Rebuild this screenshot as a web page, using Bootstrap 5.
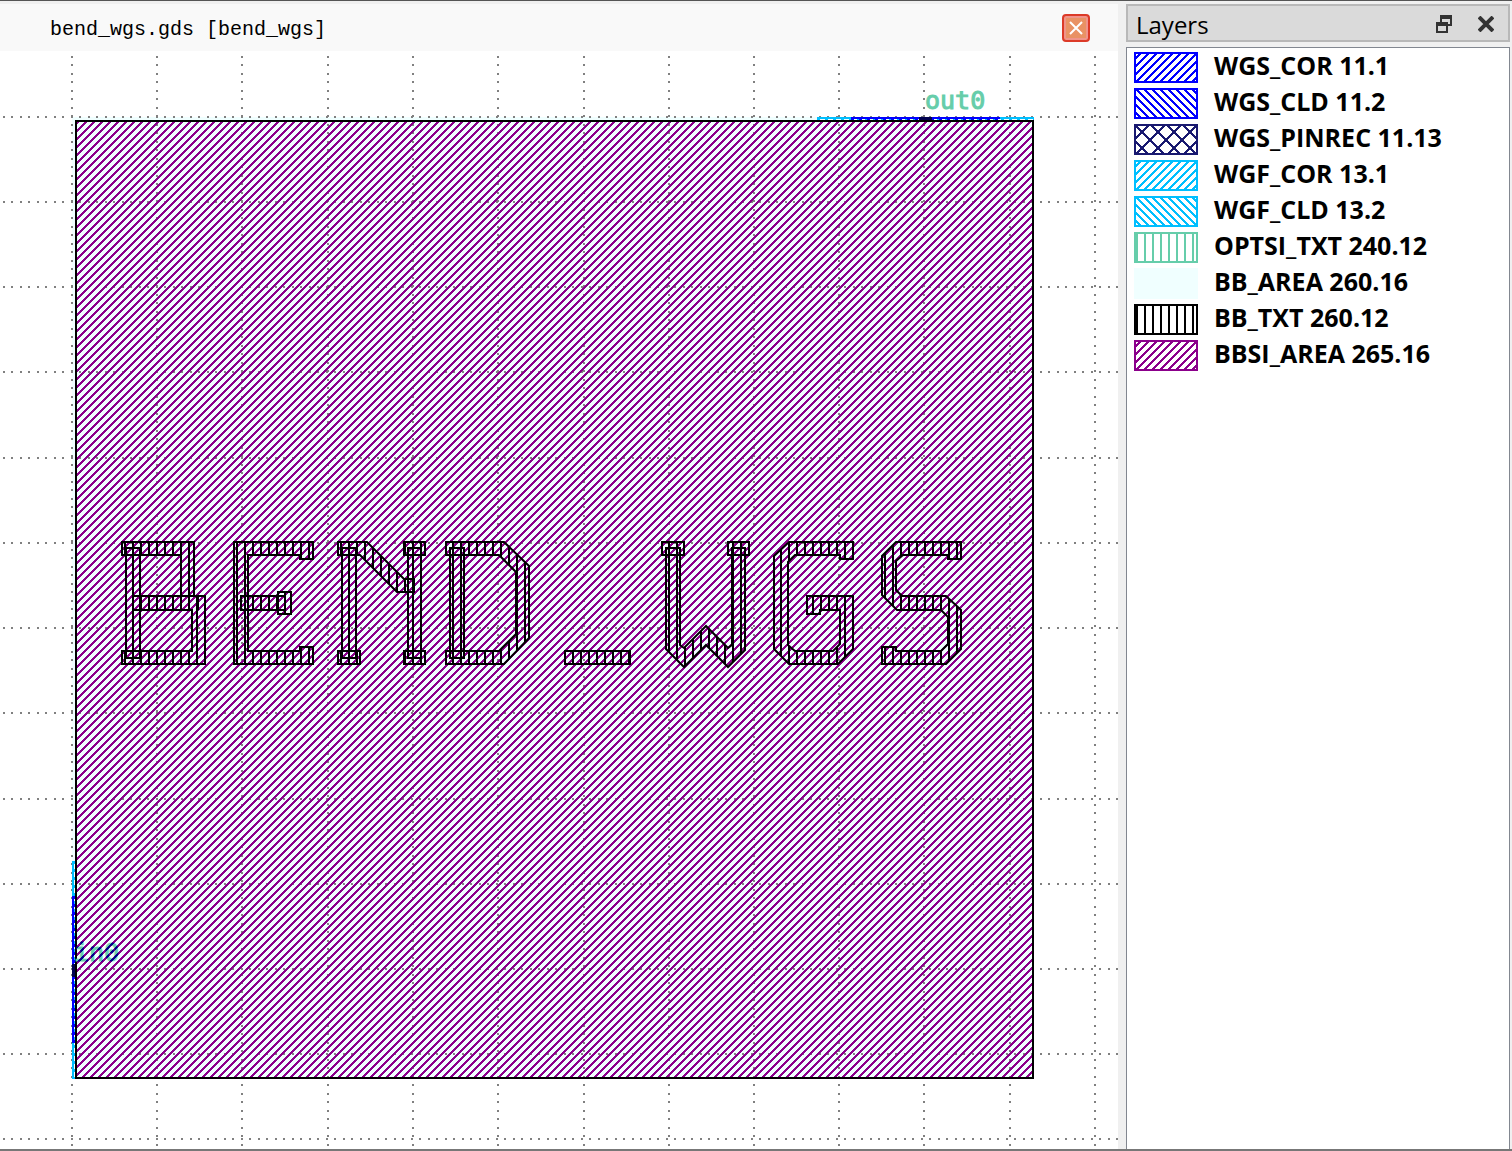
<!DOCTYPE html>
<html lang="en">
<head>
<meta charset="utf-8">
<meta name="viewport" content="width=device-width, initial-scale=1">
<title>bend_wgs.gds</title>
<link href="https://cdn.jsdelivr.net/npm/bootstrap@5.3.0/dist/css/bootstrap.min.css" rel="stylesheet">
<style>
  body { background: #f0f0f0; color: #000; }
  .app-shell { border-top: 1px solid #555; border-bottom: 2px solid #777; padding-top: 3px; }
  .view-tab { height: 47px; background: #f9f9f9; padding: 0 28px 0 50px; font: 20px "Liberation Mono", monospace; }
  .view-tab span { padding-top: 4px; }
  .tab-close { width: 28px; height: 28px; border: 2px solid #dc3a28; border-radius: 4px; background: #e99264; box-shadow: inset 0 0 0 2px #f0948a; }
  .layout-view { background: #fff; }
  .layer-dock { width: 386px; margin-left: 8px; padding-right: 2px; font-family: "Open Sans", sans-serif; }
  .dock-title { height: 38px; background: #dadada; border: 2px solid #b8b8b8; padding: 2px 10px 0 8px; font-size: 24px; }
  .dock-title span { padding-top: 2px; }
  .dock-title button { width: 24px; height: 24px; }
  .dock-title .tools { gap: 18px; }
  .layer-list { margin-top: 5px; background: #fff; border: 1px solid #828790; border-bottom: 0; padding: 1px 7px; font-size: 25px; font-weight: 700; line-height: 32px; }
  .layer-list li { height: 36px; gap: 16px; }
  .layer-list span { padding-bottom: 4px; }
  .cell-label { font: 25px "DejaVu Sans Mono", monospace; }
</style>
<script src="https://cdn.jsdelivr.net/npm/bootstrap@5.3.0/dist/js/bootstrap.bundle.min.js"></script>
</head>
<body>
<div class="app-shell d-flex vh-100 overflow-hidden">
  <main class="d-flex flex-column flex-grow-1">
    <div class="view-tab d-flex align-items-center justify-content-between flex-shrink-0">
      <span>bend_wgs.gds [bend_wgs]</span>
      <button class="tab-close d-flex align-items-center justify-content-center p-0" aria-label="Close view">
        <svg width="14" height="14" stroke="#fff" stroke-width="2"><path d="M1 1 13 13M13 1 1 13"/></svg>
      </button>
    </div>
    <div class="layout-view flex-grow-1 overflow-hidden">
      <svg class="d-block" width="100%" height="100%" role="img" aria-label="Layout of cell bend_wgs">
        <defs>
          <path id="diag" d="M6 0h2v1h-2zM0 0h1v1h-1zM5 1h3v1h-3zM4 2h3v1h-3zM3 3h3v1h-3zM2 4h3v1h-3zM1 5h3v1h-3zM0 6h3v1h-3zM0 7h2v1h-2zM7 7h1v1h-1z"/>
          <path id="diagBack" d="M0 0h3v1h-3zM1 1h3v1h-3zM2 2h3v1h-3zM3 3h3v1h-3zM4 4h3v1h-3zM5 5h3v1h-3zM6 6h2v1h-2zM0 6h1v1h-1zM7 7h1v1h-1zM0 7h2v1h-2z"/>
          <pattern id="hatchArea" width="8" height="8" patternUnits="userSpaceOnUse"><use href="#diag" fill="#8b008b" shape-rendering="crispEdges"/></pattern>
          <pattern id="hatchLabel" width="8" height="8" patternUnits="userSpaceOnUse"><rect width="8" height="8" fill="#66cdaa"/><use href="#diag" fill="#00008b" shape-rendering="crispEdges"/></pattern>
          <pattern id="hatchText" width="8" height="8" patternUnits="userSpaceOnUse"><rect x="4" width="2" height="8"/></pattern>
        </defs>
        <g transform="translate(0 -51)">
          <rect x="72" y="117" width="962" height="962" fill="#f0ffff"/>
          <!-- dotted grid -->
          <g stroke="#808080" stroke-width="2" fill="none" stroke-dasharray="2 6 2 7" shape-rendering="crispEdges">
            <path d="M72 56V2400M157 56V2400M242 56V2400M328 56V2400M413 56V2400M498 56V2400M584 56V2400M669 56V2400M754 56V2400M839 56V2400M924 56V2400M1010 56V2400M1095 56V2400"/>
            <path d="M3 117H1118M3 202H1118M3 287H1118M3 372H1118M3 458H1118M3 543H1118M3 628H1118M3 713H1118M3 799H1118M3 884H1118M3 969H1118M3 1054H1118M3 1139H1118"/>
          </g>
          <rect x="76" y="121" width="957" height="957" fill="url(#hatchArea)" stroke="#000" stroke-width="2"/>
          <!-- waveguide ends -->
          <g fill="none" stroke-width="2" shape-rendering="crispEdges">
            <path stroke="#00bfff" d="M817 118H1034M73 861V1079"/>
            <path stroke="#0000ff" d="M851 118H1000M73 896V1043"/>
            <path stroke="#00bfff" stroke-width="1" stroke-dasharray="3 5" d="M817 119.5H1034M74.5 861V1079"/>
            <path stroke="#0000ff" stroke-width="1" stroke-dasharray="3 5" d="M851 119.5H1000M74.5 896V1043"/>
            <path stroke="#000050" stroke-width="3" d="M919 118.5H932M73.5 964V977"/>
          </g>
          <!-- block name -->
          <g fill="url(#hatchText)" stroke="#000" stroke-width="2">
            <path d="M122 542H194V596H181V555H122z"/>
            <path d="M126 548H140V658H126z"/>
            <path d="M133 596H205V664H122V651H192V610H133zM198 596V610"/>
            <path d="M234 542H313V559H300V555H248V651H300V647H313V664H234z"/>
            <path d="M241 596H285V610H241zM278 592H291V614H278z"/>
            <path d="M342 548H356V658H342z"/>
            <path d="M338 542H367L404 579H414V592H397L360 555H338z"/>
            <path d="M338 651H360V664H338zM404 542H425V555H404z"/>
            <path d="M408 548H421V658H408z"/>
            <path d="M404 651H425V664H404z"/>
            <path d="M450 548H464V658H450z"/>
            <path d="M446 542H504L529 566V638L504 664H446V651H499L516 634V572L499 555H446z"/>
            <path d="M565 651H630V664H565z"/>
            <path d="M662 542H684V555H662zM728 542H749V555H728z"/>
            <path d="M666 548H680V645L684 648 706 626 728 648 732 645V548H745V650L728 667 706 645 684 667 666 649z"/>
            <path d="M789 542H853V559H840V555H795L788 562V645L795 651H833L840 644V610H820V614H807V596H853V649L838 664H789L774 649V556z"/>
            <path d="M896 542H961V559H948V555H903L896 561V590L902 596H946L961 610V649L946 664H882V647H896V651H941L948 644V617L941 610H897L882 595V556z"/>
          </g>
          <text class="cell-label" x="925" y="109" fill="#66cdaa" stroke="#66cdaa">out0</text>
          <text class="cell-label" x="74" y="961" fill="url(#hatchLabel)" stroke="url(#hatchLabel)">in0</text>
        </g>
      </svg>
    </div>
  </main>
  <aside class="layer-dock d-flex flex-column flex-shrink-0">
    <header class="dock-title d-flex align-items-center justify-content-between flex-shrink-0">
      <span>Layers</span>
      <div class="tools d-flex">
        <button class="btn p-0 border-0 d-flex align-items-center justify-content-center" aria-label="Float panel">
          <svg width="16" height="18" fill="none" stroke="#333" stroke-width="2" shape-rendering="crispEdges"><path d="M5 7V1H15V10H11"/><path d="M5 2H15" stroke-width="4"/><path d="M1 8H11V17H1z"/><path d="M0 9H12" stroke-width="4"/></svg>
        </button>
        <button class="btn p-0 border-0 d-flex align-items-center justify-content-center" aria-label="Close panel">
          <svg width="16" height="16" stroke="#333" stroke-width="4"><path d="M1 1 15 15M15 1 1 15"/></svg>
        </button>
      </div>
    </header>
    <ul class="layer-list list-unstyled mb-0 flex-grow-1">
      <li class="d-flex align-items-center"><svg width="64" height="31" shape-rendering="crispEdges"><defs>
        <pattern id="p1" width="8" height="8" patternUnits="userSpaceOnUse"><use href="#diag" fill="#0000ff"/></pattern>
        <pattern id="p2" width="8" height="8" patternUnits="userSpaceOnUse"><use href="#diagBack" fill="#0000ff"/></pattern>
        <pattern id="p3" width="16" height="16" patternUnits="userSpaceOnUse"><path d="M0 0 16 16M16 0 0 16" stroke="#191970" stroke-width="2"/></pattern>
        <pattern id="p4" width="8" height="8" patternUnits="userSpaceOnUse"><use href="#diag" fill="#00bfff"/></pattern>
        <pattern id="p5" width="8" height="8" patternUnits="userSpaceOnUse"><use href="#diagBack" fill="#00bfff"/></pattern>
        <pattern id="p6" width="8" height="8" patternUnits="userSpaceOnUse"><path d="M3 0V8" stroke="#66cdaa" stroke-width="2"/></pattern>
        <pattern id="p8" width="8" height="8" patternUnits="userSpaceOnUse"><path d="M3 0V8" stroke="#000" stroke-width="2"/></pattern>
        <pattern id="p9" width="8" height="8" patternUnits="userSpaceOnUse"><use href="#diag" fill="#8b008b"/></pattern>
        </defs><rect x="1" y="1" width="62" height="29" fill="url(#p1)" stroke="#0000ff" stroke-width="2"/></svg><span>WGS_COR 11.1</span></li>
      <li class="d-flex align-items-center"><svg width="64" height="31" shape-rendering="crispEdges"><rect x="1" y="1" width="62" height="29" fill="url(#p2)" stroke="#0000ff" stroke-width="2"/></svg><span>WGS_CLD 11.2</span></li>
      <li class="d-flex align-items-center"><svg width="64" height="31" shape-rendering="crispEdges"><rect x="1" y="1" width="62" height="29" fill="url(#p3)" stroke="#191970" stroke-width="2"/></svg><span>WGS_PINREC 11.13</span></li>
      <li class="d-flex align-items-center"><svg width="64" height="31" shape-rendering="crispEdges"><rect x="1" y="1" width="62" height="29" fill="url(#p4)" stroke="#00bfff" stroke-width="2"/></svg><span>WGF_COR 13.1</span></li>
      <li class="d-flex align-items-center"><svg width="64" height="31" shape-rendering="crispEdges"><rect x="1" y="1" width="62" height="29" fill="url(#p5)" stroke="#00bfff" stroke-width="2"/></svg><span>WGF_CLD 13.2</span></li>
      <li class="d-flex align-items-center"><svg width="64" height="31" shape-rendering="crispEdges"><rect x="1" y="1" width="62" height="29" fill="url(#p6)" stroke="#66cdaa" stroke-width="2"/></svg><span>OPTSI_TXT 240.12</span></li>
      <li class="d-flex align-items-center"><svg width="64" height="31"><rect width="64" height="31" fill="#f0ffff"/></svg><span>BB_AREA 260.16</span></li>
      <li class="d-flex align-items-center"><svg width="64" height="31" shape-rendering="crispEdges"><rect x="1" y="1" width="62" height="29" fill="url(#p8)" stroke="#000" stroke-width="2"/></svg><span>BB_TXT 260.12</span></li>
      <li class="d-flex align-items-center"><svg width="64" height="31" shape-rendering="crispEdges"><rect x="1" y="1" width="62" height="29" fill="url(#p9)" stroke="#8b008b" stroke-width="2"/></svg><span>BBSI_AREA 265.16</span></li>
    </ul>
  </aside>
</div>
</body>
</html>
